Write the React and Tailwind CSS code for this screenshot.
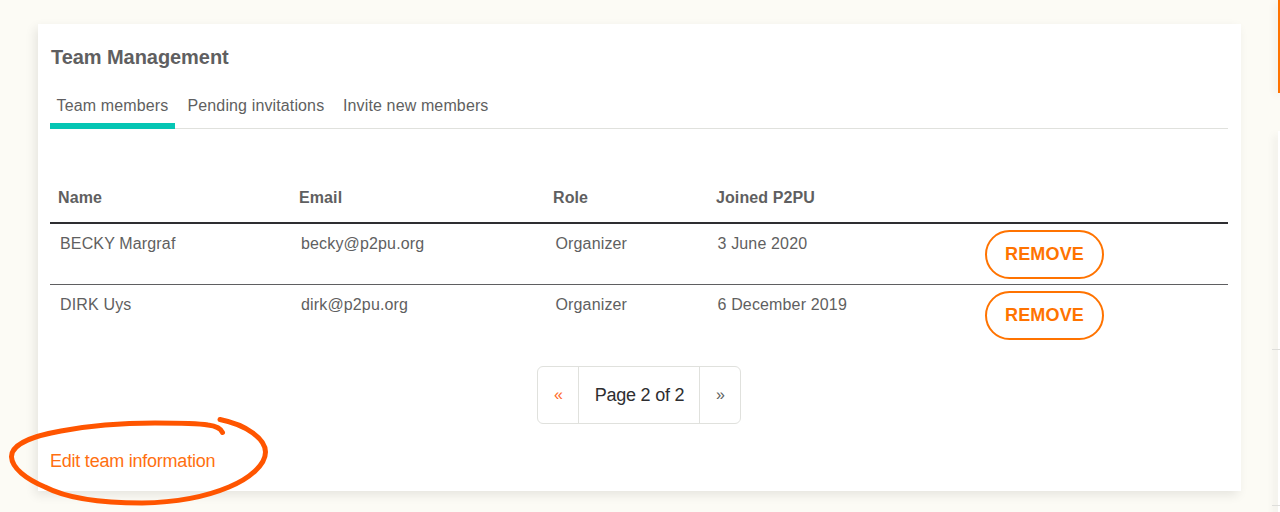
const members = [
  { name: "BECKY Margraf", email: "becky@p2pu.org", role: "Organizer", joined: "3 June 2020" },
  { name: "DIRK Uys", email: "dirk@p2pu.org", role: "Organizer", joined: "6 December 2019" },
];

function Tabs() {
  return (
    <nav className="mt-[15px] flex h-[42px] border-b border-[#e0e1dd] text-base leading-6 tracking-[0.13px]">
      <a className="h-[42px] w-[125px] shrink-0 border-b-[6px] border-[#05c6b4] pt-[7px] pl-[6.5px]">Team members</a>
      <a className="w-[156px] shrink-0 pt-[7px] pl-[12.5px]">Pending invitations</a>
      <a className="pt-[7px] pl-3">Invite new members</a>
    </nav>
  );
}

function MembersTable() {
  return (
    <div className="mt-[43px] text-base leading-6">
      <div className="grid h-[52px] grid-cols-[241px_254px_163px_268px_1fr] border-b-2 border-[#2e2e31] pt-[14px] pl-2 font-bold tracking-[0.1px]">
        <span>Name</span>
        <span>Email</span>
        <span>Role</span>
        <span>Joined P2PU</span>
      </div>
      {members.map((m, i) => (
        <div
          key={m.email}
          className={
            "grid h-[61px] grid-cols-[241px_254.500px_162px_267.500px_1fr] pt-2 pl-[10px] tracking-[0.15px] " +
            (i === 0 ? "border-b border-[#5f5f61]" : "")
          }
        >
          <span>{m.name}</span>
          <span>{m.email}</span>
          <span>{m.role}</span>
          <span>{m.joined}</span>
          <button className="-mt-[2px] h-[49px] w-[119px] rounded-[25px] border-2 border-[#ff7300] text-[18px] leading-[45px] font-bold text-[#ff7300]">
            REMOVE
          </button>
        </div>
      ))}
    </div>
  );
}

function Pagination() {
  return (
    <div className="mt-5 ml-[487px] flex h-[58px] w-[204px] items-stretch rounded-md border border-[#e0e1dd] text-center text-[18px] leading-[56px]">
      <span className="w-10 pl-px text-base leading-[56px] text-[#ff6a28]">«</span>
      <span className="w-[122px] border-x border-[#e0e1dd] pl-px tracking-[-0.22px] text-[#2e2e31]">Page 2 of 2</span>
      <span className="w-10 pl-px text-base leading-[56px]">»</span>
    </div>
  );
}

export default function App() {
  return (
    <div className="relative flex h-[512px] w-[1280px] justify-between overflow-hidden bg-[#fcfbf5] pl-[38px] font-['Liberation_Sans',Arial,sans-serif] text-[#5f5f61]">
      <main className="mt-6 h-[467px] w-[1203px] bg-white pt-[18px] pr-[13px] pl-3 shadow-[-3px_4px_10px_rgba(0,0,0,0.09)]">
        <h1 className="pl-px text-[20px] leading-[30px] font-bold tracking-[-0.06px]">Team Management</h1>
        <Tabs />
        <MembersTable />
        <Pagination />
        <a className="mt-[23px] block text-[18px] leading-7 tracking-[-0.23px] text-[#ff6f10]">Edit team information</a>
      </main>

      <aside className="flex w-2 flex-col items-end">
        <div className="h-[93px] w-[2px] shrink-0 bg-[#ff7300] shadow-[-1px_2px_8px_rgba(0,0,0,0.15)]" />
        <div className="mt-[38px] flex h-[390px] w-[2px] shrink-0 flex-col items-end bg-white pt-[218px] shadow-[-2px_4px_8px_rgba(0,0,0,0.17)]">
          <div className="h-px w-2 shrink-0 bg-[#dededb]" />
          <div className="mt-[155px] h-px w-2 shrink-0 bg-[#dededb]" />
        </div>
      </aside>

      <svg
        className="pointer-events-none absolute top-[400px] left-0 h-[112px] w-[290px]"
        viewBox="0 0 290 112"
        fill="none"
        stroke="#ff5500"
        strokeWidth="5"
        strokeLinecap="round"
        strokeLinejoin="round"
      >
        <path d="M220 19.500C247 25 265.500 39 265.500 52C265.500 65 249 79 229 87C203 98 172 102.500 142 103C106 103 68 99 45 87C26 79 12 68 11.500 57C11 43 38 35 61 31C92 25 124 23 155 23C179 23 196 23 208 25C216 26 221 29 222.500 32.500" />
      </svg>
    </div>
  );
}
